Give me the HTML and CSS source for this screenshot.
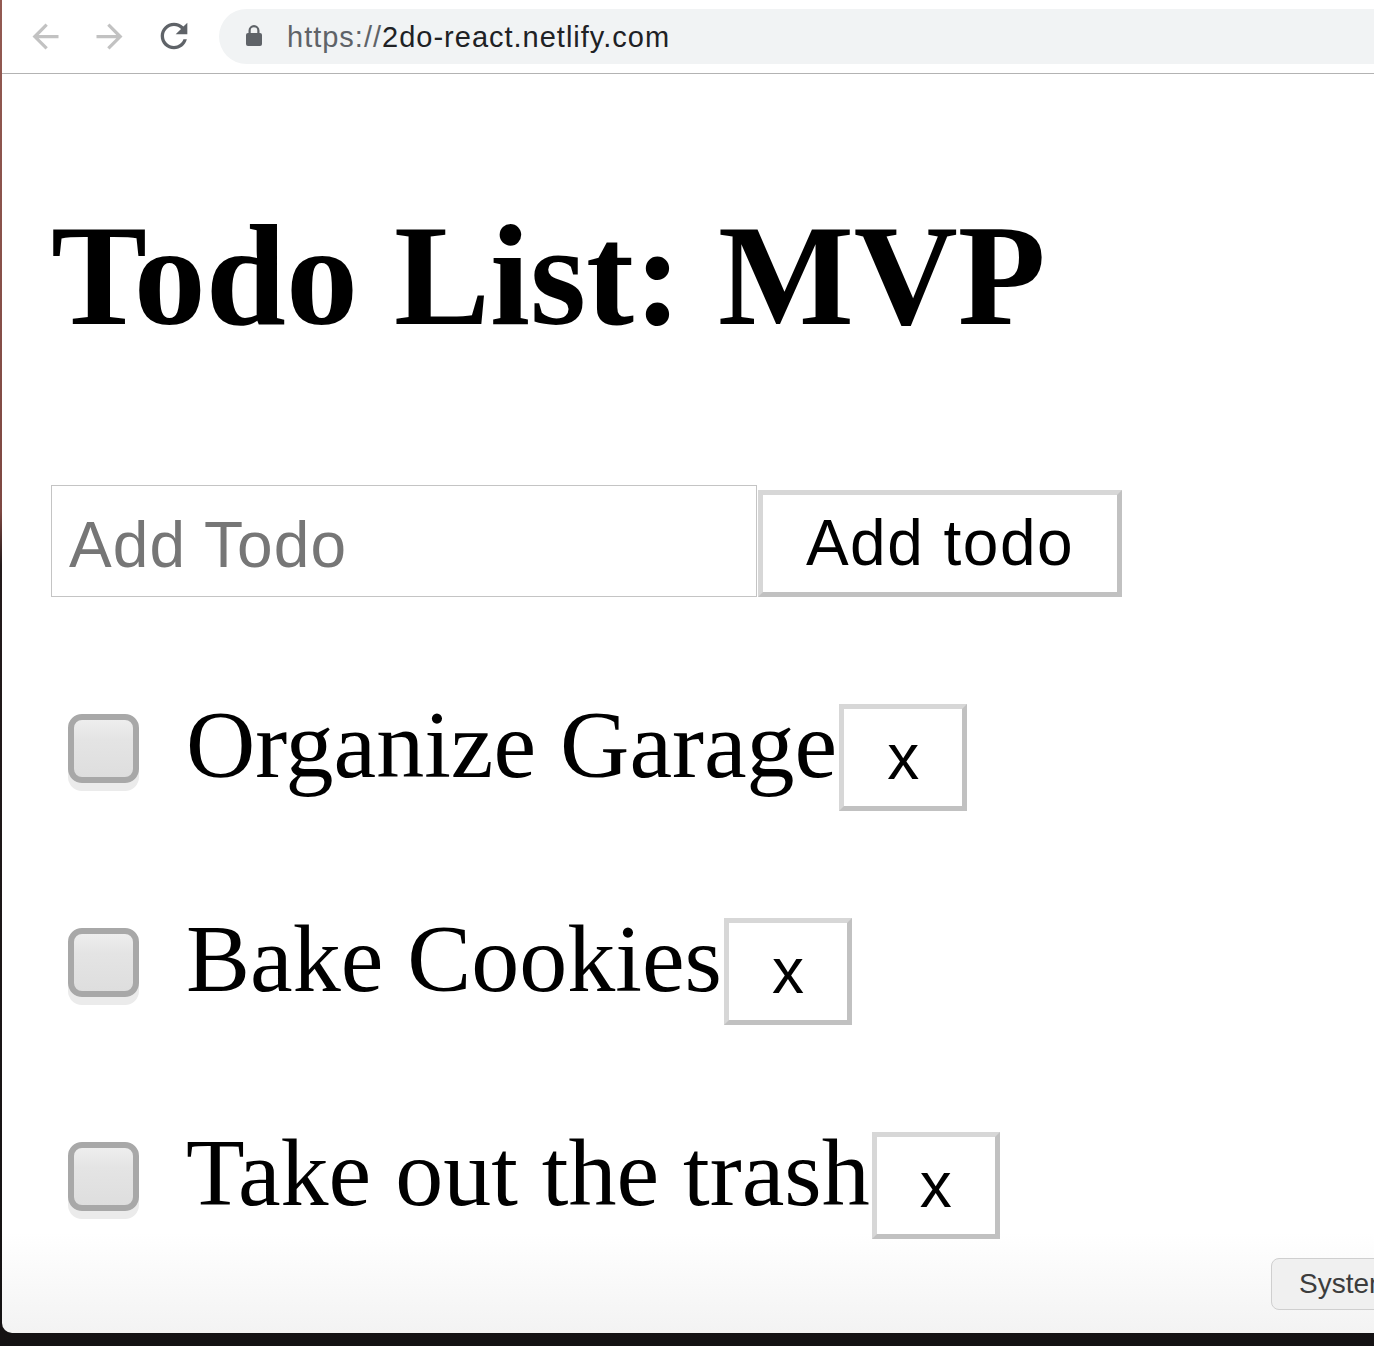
FILE: index.html
```html
<!DOCTYPE html>
<html lang="en">
<head>
<meta charset="utf-8">
<title>Todo List: MVP</title>
<link rel="stylesheet" href="styles.css">
</head>
<body>
<div class="window">
  <header class="toolbar">
    <svg class="nav-icon nav-disabled" viewBox="0 0 24 24" width="39" height="39"><path d="M20 11H7.83l5.59-5.59L12 4l-8 8 8 8 1.41-1.41L7.83 13H20v-2z"/></svg>
    <svg class="nav-icon nav-disabled" viewBox="0 0 24 24" width="39" height="39"><path d="M12 4l-1.41 1.41L16.17 11H4v2h12.17l-5.58 5.59L12 20l8-8z"/></svg>
    <svg class="nav-icon nav-active reload" viewBox="0 0 24 24" width="40" height="40"><path d="M17.65 6.35C16.2 4.9 14.21 4 12 4c-4.42 0-7.990 3.58-7.99 8s3.57 8 7.99 8c3.73 0 6.84-2.55 7.73-6h-2.08c-.82 2.33-3.04 4-5.650 4-3.31 0-6-2.69-6-6s2.69-6 6-6c1.66 0 3.14.69 4.22 1.78L13 11h7V4l-2.35 2.35z"/></svg>
    <div class="omnibox">
      <svg class="lock" viewBox="0 0 16 22" width="16" height="22"><path d="M3.6 10V6.6a4.4 4.4 0 0 1 8.8 0V10" fill="none" stroke="#5f6368" stroke-width="2.2"/><rect x="0" y="9" width="16" height="13" rx="2" fill="#5f6368"/></svg>
      <span class="url"><span class="scheme">https://</span><span class="host">2do-react.netlify.com</span></span>
    </div>
  </header>
  <main class="page">
    <h1 class="title">Todo List: MVP</h1>
    <form class="add-form">
      <input class="add-input" type="text" placeholder="Add Todo">
      <button class="add-btn" type="button">Add todo</button>
    </form>
    <ul class="todos">
      <li class="todo">
        <input class="check" type="checkbox">
        <span class="label">Organize Garage</span>
        <button class="del" type="button">x</button>
      </li>
      <li class="todo">
        <input class="check" type="checkbox">
        <span class="label">Bake Cookies</span>
        <button class="del" type="button">x</button>
      </li>
      <li class="todo">
        <input class="check" type="checkbox">
        <span class="label">Take out the trash</span>
        <button class="del" type="button">x</button>
      </li>
    </ul>
  </main>
  <button class="system-btn" type="button">System</button>
</div>
</body>
</html>
```

FILE: styles.css
```css
html, body {
  margin: 0;
  padding: 0;
}

body {
  width: 1374px;
  height: 1346px;
  overflow: hidden;
  background: linear-gradient(#935a52 0, #7e4842 38%, #231a1b 42%, #141213 100%);
}

.window {
  position: relative;
  margin-left: 2px;
  width: 1372px;
  height: 1333px;
  overflow: hidden;
  border-bottom-left-radius: 10px;
  background: linear-gradient(to bottom, #ffffff calc(100% - 100px), #f3f3f3 100%);
}

/* ---------- browser toolbar ---------- */
.toolbar {
  display: flex;
  align-items: center;
  gap: 25px;
  height: 74px;
  padding: 0 0 1px 24px;
  box-sizing: border-box;
  border-bottom: 1px solid #b3b3b3;
  background: #ffffff;
}

.nav-icon {
  flex: none;
}

.nav-disabled {
  fill: #c2c2c2;
}

.nav-active {
  fill: #5f6368;
}

.omnibox {
  flex: 1;
  display: flex;
  align-items: center;
  height: 55px;
  margin-right: -40px;
  padding-left: 27px;
  border-radius: 28px 0 0 28px;
  background: #f1f3f4;
}

.lock {
  flex: none;
  margin-top: -2px;
}

.url {
  margin-left: 25px;
  padding-top: 2px;
  font-family: "Liberation Sans", Arial, sans-serif;
  font-size: 29px;
  letter-spacing: 1px;
  white-space: nowrap;
}

.scheme {
  color: #5f6368;
}

.host {
  color: #202124;
}

/* ---------- page ---------- */
.page {
  padding: 119px 0 0 49px;
}

.title {
  margin: 0;
  font-family: "Liberation Serif", "Times New Roman", serif;
  font-weight: bold;
  font-size: 144px;
  line-height: 166px;
  color: #000;
}

.add-form {
  display: flex;
  align-items: flex-end;
  margin: 126px 0 0 0;
}

.add-input {
  width: 706px;
  height: 112px;
  box-sizing: border-box;
  margin: 0;
  padding: 8px 18px 0 17px;
  border: 1px solid #c4c4c4;
  border-radius: 0;
  outline: none;
  font-family: "Liberation Sans", Arial, sans-serif;
  font-size: 64px;
  letter-spacing: 1.1px;
  color: #000;
  background: #fff;
}

.add-input::placeholder {
  color: #767676;
}

.add-btn,
.del {
  box-sizing: border-box;
  margin: 0;
  padding: 0;
  border: 5px solid;
  border-color: #d7d7d7 #c1c1c1 #c1c1c1 #d7d7d7;
  border-radius: 0;
  background: #fff;
  font-family: "Liberation Sans", Arial, sans-serif;
  font-size: 64px;
  color: #000;
  text-align: center;
}

.add-btn {
  width: 364px;
  height: 107px;
  margin-left: 1px;
  line-height: 97px;
  letter-spacing: 1.5px;
}

.todos {
  list-style: none;
  margin: 93px 0 0 0;
  padding: 0;
  display: flex;
  flex-direction: column;
  gap: 93px;
}

.todo {
  display: flex;
  align-items: flex-start;
  height: 121px;
}

.check {
  appearance: none;
  -webkit-appearance: none;
  flex: none;
  width: 71px;
  height: 69px;
  margin: 24px 0 0 17px;
  box-sizing: border-box;
  border: 6px solid #a8a8a8;
  border-radius: 14px;
  background: linear-gradient(#eeeeee 0, #e4e4e4 35%, #dedede 100%);
  box-shadow: 0 8px 0 0 #ebebeb;
}

.label {
  margin-left: 47px;
  font-family: "Liberation Serif", "Times New Roman", serif;
  font-size: 96px;
  line-height: 110px;
  color: #000;
  white-space: nowrap;
}

.del {
  flex: none;
  width: 128px;
  height: 107px;
  margin: 14px 0 0 2px;
  line-height: 97px;
}

/* floating system button in the lower right corner, clipped by the window edge */
.system-btn {
  position: absolute;
  left: 1269px;
  top: 1258px;
  width: 150px;
  height: 52px;
  box-sizing: border-box;
  padding: 0 0 0 27px;
  text-align: left;
  border: 1px solid #cfcfcf;
  border-radius: 8px;
  background: #f0f0f0;
  font-family: "Liberation Sans", Arial, sans-serif;
  font-size: 28px;
  color: #3c3c3c;
}
```
